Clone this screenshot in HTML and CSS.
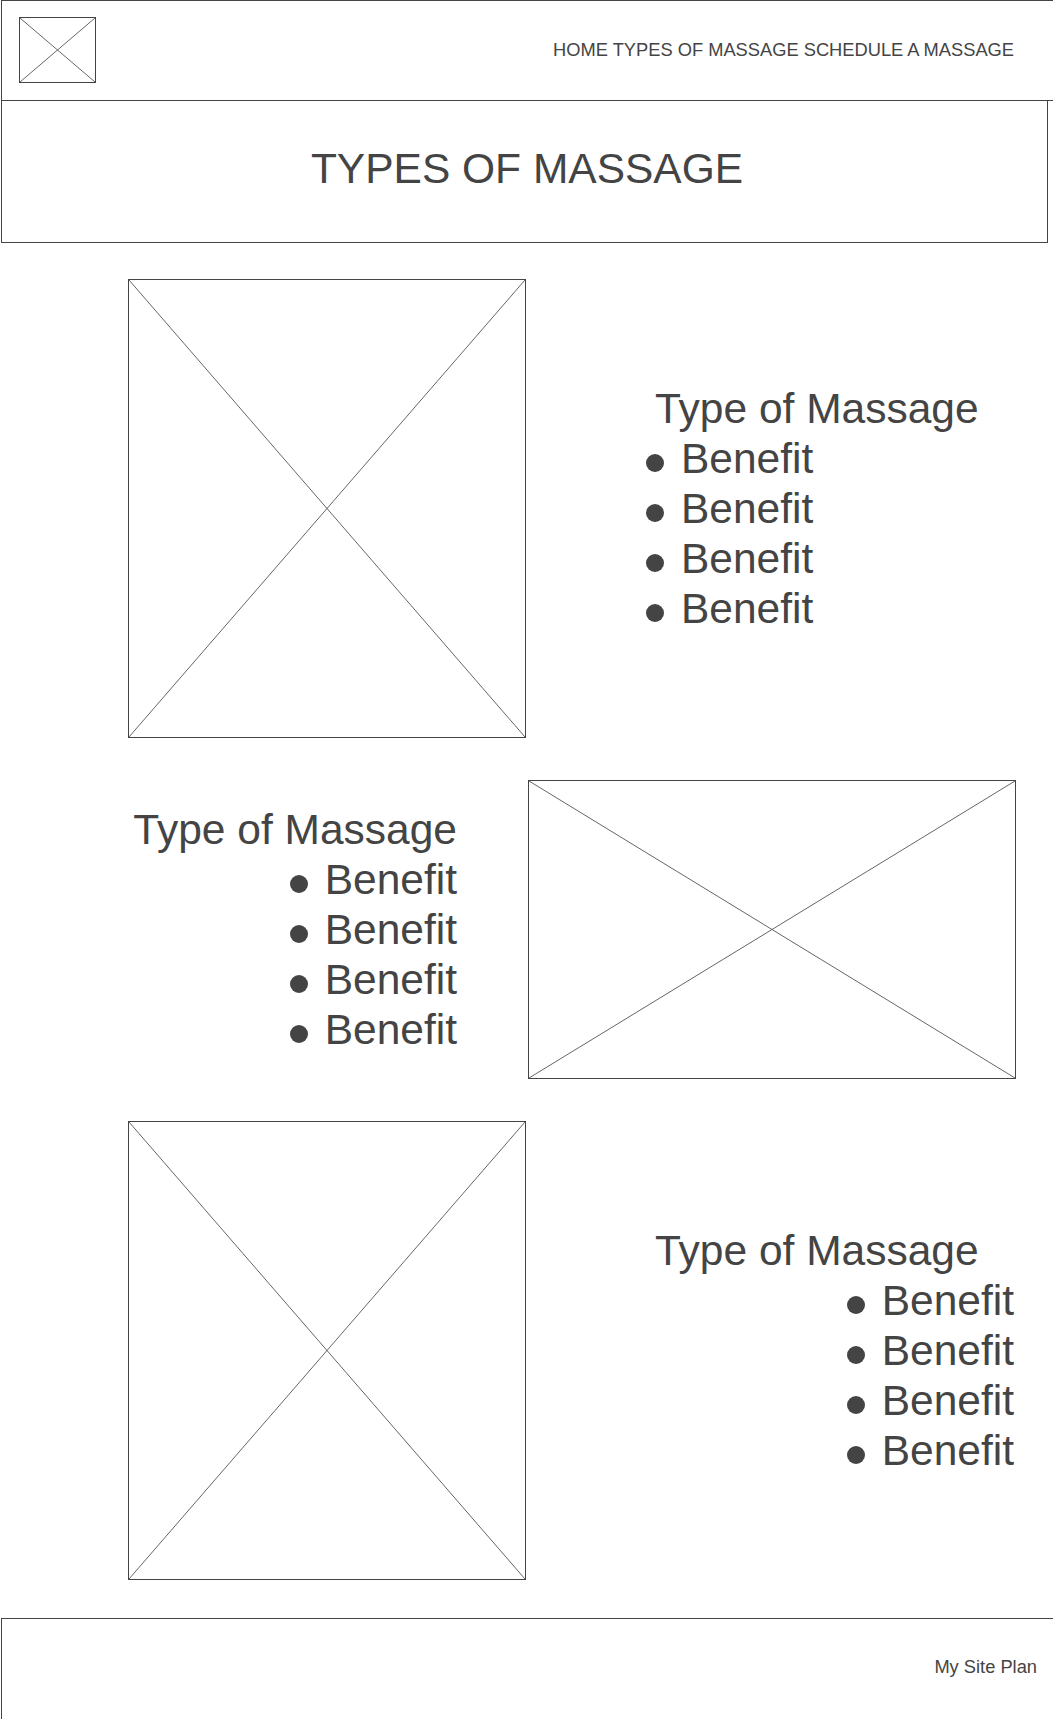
FILE: index.html
```html
<!DOCTYPE html>
<html lang="en">

<head>
    <meta charset="UTF-8">
    <meta name="viewport" content="width=device-width, initial-scale=1.0">
    <title>Types of Massage</title>
    <link rel="stylesheet" href="styles.css">
</head>

<body>

    <div class="site-header">
        <div class="site-logo placeholder">
            <svg viewBox="0 0 100 100" preserveAspectRatio="none">
                <line x1="0" y1="0" x2="100" y2="100" />
                <line x1="100" y1="0" x2="0" y2="100" />
            </svg>
        </div>
        <div class="site-nav">HOME TYPES OF MASSAGE SCHEDULE A MASSAGE</div>
    </div>

    <div class="page-hero">
        <h1 class="page-hero-title">TYPES OF MASSAGE</h1>
    </div>

    <!-- image left, text right -->
    <div class="massage-row">
        <div class="placeholder massage-image-tall">
            <svg viewBox="0 0 100 100" preserveAspectRatio="none">
                <line x1="0" y1="0" x2="100" y2="100" />
                <line x1="100" y1="0" x2="0" y2="100" />
            </svg>
        </div>
        <div class="massage-text massage-text-right">
            <div class="massage-title">Type of Massage</div>
            <ul class="benefit-list">
                <li>Benefit</li>
                <li>Benefit</li>
                <li>Benefit</li>
                <li>Benefit</li>
            </ul>
        </div>
    </div>

    <!-- text left, image right -->
    <div class="massage-row">
        <div class="massage-text massage-text-left">
            <div class="massage-title">Type of Massage</div>
            <ul class="benefit-list">
                <li>Benefit</li>
                <li>Benefit</li>
                <li>Benefit</li>
                <li>Benefit</li>
            </ul>
        </div>
        <div class="placeholder massage-image-wide">
            <svg viewBox="0 0 100 100" preserveAspectRatio="none">
                <line x1="0" y1="0" x2="100" y2="100" />
                <line x1="100" y1="0" x2="0" y2="100" />
            </svg>
        </div>
    </div>

    <div class="massage-row">
        <div class="placeholder massage-image-tall">
            <svg viewBox="0 0 100 100" preserveAspectRatio="none">
                <line x1="0" y1="0" x2="100" y2="100" />
                <line x1="100" y1="0" x2="0" y2="100" />
            </svg>
        </div>
        <div class="massage-text massage-text-right massage-text-split">
            <div class="massage-title">Type of Massage</div>
            <ul class="benefit-list">
                <li>Benefit</li>
                <li>Benefit</li>
                <li>Benefit</li>
                <li>Benefit</li>
            </ul>
        </div>
    </div>

    <div class="site-footer">
        <span class="site-footer-text">My Site Plan</span>
    </div>

</body>

</html>
```

FILE: styles.css
```css
body {
    margin: 0;
    width: 1053px;
    background-color: #fff;
    color: #444;
    font-family: "Liberation Sans", Arial, Helvetica, sans-serif;
    overflow: hidden;
}

.placeholder {
    box-sizing: border-box;
    border: 1px solid #444;
    flex-shrink: 0;
}

.placeholder svg {
    display: block;
    width: 100%;
    height: 100%;
}

.placeholder line {
    stroke: #666;
    stroke-width: 1;
    vector-effect: non-scaling-stroke;
}

.site-header {
    box-sizing: border-box;
    display: flex;
    align-items: center;
    justify-content: space-between;
    height: 101px;
    margin-left: 1px;
    padding: 0 39px 2px 17px;
    border-top: 1px solid #444;
    border-left: 1px solid #444;
    border-bottom: 1px solid #444;
}

.site-logo {
    width: 77px;
    height: 66px;
}

.site-nav {
    font-size: 18.3px;
    line-height: 20px;
    white-space: nowrap;
}

.page-hero {
    box-sizing: border-box;
    display: flex;
    align-items: center;
    justify-content: center;
    width: 1047px;
    height: 142px;
    margin-left: 1px;
    padding: 0 0 6px 5px;
    border-left: 1px solid #444;
    border-right: 1px solid #444;
    border-bottom: 1px solid #444;
}

.page-hero-title {
    margin: 0;
    font-size: 42.5px;
    font-weight: 400;
    line-height: 50px;
}

.massage-row {
    display: flex;
    align-items: center;
    padding-left: 128px;
    margin-top: 36px;
}

.massage-row + .massage-row {
    margin-top: 42px;
}

.massage-image-tall {
    width: 398px;
    height: 459px;
}

.massage-image-wide {
    width: 488px;
    height: 299px;
    margin-left: 71px;
}

.massage-text {
    font-size: 42.5px;
    line-height: 50px;
    white-space: nowrap;
}

.massage-text-right {
    width: 368px;
    margin-left: 120px;
}

.massage-text-right .massage-title {
    padding-left: 9px;
}

.massage-text-left {
    width: 329px;
    text-align: right;
}

.massage-text-split .benefit-list {
    text-align: right;
}

.benefit-list {
    list-style: none;
    margin: 0;
    padding: 0;
}

.benefit-list li::before {
    content: "";
    display: inline-block;
    width: 18px;
    height: 18px;
    margin-right: 17px;
    border-radius: 50%;
    background-color: #444;
    vertical-align: 1px;
}

.site-footer {
    box-sizing: border-box;
    display: flex;
    align-items: center;
    justify-content: flex-end;
    height: 101px;
    margin-top: 38px;
    margin-left: 1px;
    padding: 0 16px 5px 0;
    border-top: 1px solid #444;
    border-left: 1px solid #444;
}

.site-footer-text {
    font-size: 18.3px;
    line-height: 20px;
}
```
